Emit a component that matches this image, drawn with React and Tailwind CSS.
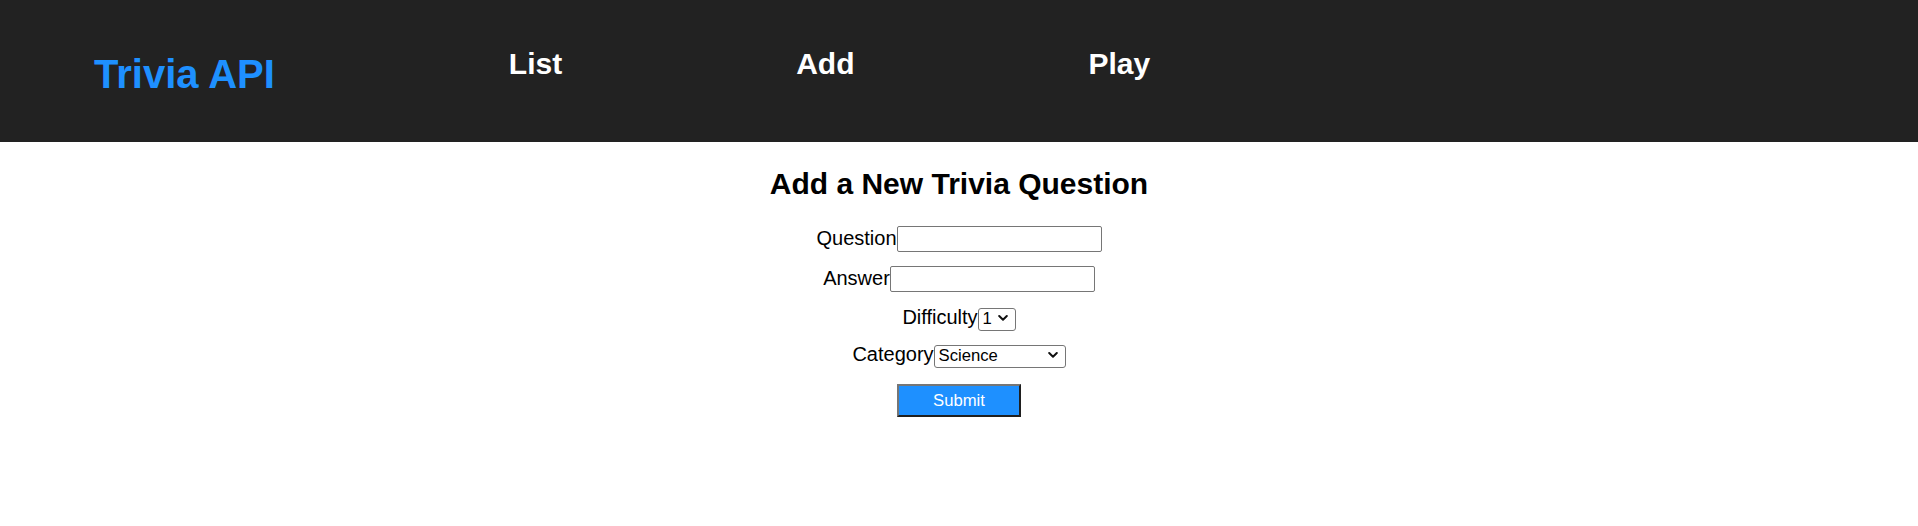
import React from "react";

function Chevron() {
  return (
    <svg width="10" height="7" viewBox="0 0 10 7" className="pointer-events-none absolute right-[8px] top-1/2 -translate-y-1/2">
      <path d="M1.2 1.5l3.8 3.8 3.8-3.8" fill="none" stroke="#111" strokeWidth="2" strokeLinecap="round" strokeLinejoin="round" />
    </svg>
  );
}

function Select({ value, options, width }) {
  return (
    <div className={`relative ${width} h-[23px]`}>
      <select
        defaultValue={value}
        className="h-full w-full appearance-none rounded-[3px] border border-[#767676] bg-white pl-[4px] pr-[20px] text-[16.67px] leading-none text-black outline-none"
        style={{ fontFamily: '"Liberation Sans", Arial, sans-serif' }}
      >
        {options.map((o) => (
          <option key={o} value={o}>
            {o}
          </option>
        ))}
      </select>
      <Chevron />
    </div>
  );
}

export default function App() {
  const font = { fontFamily: '"Liberation Sans", Arial, Helvetica, sans-serif' };
  return (
    <div className="min-h-[526px] w-full bg-white text-black" style={font}>
      <header className="flex h-[142px] items-start bg-[#222222] pl-[94px]">
        <h1 className="mt-[51px] text-[40px] font-bold leading-[46px] text-[#1e90ff]">Trivia API</h1>
        <nav className="ml-[234px] mt-[47px] flex gap-[234px] text-[30px] font-bold leading-[34px] text-white">
          <a className="cursor-pointer">List</a>
          <a className="cursor-pointer">Add</a>
          <a className="cursor-pointer">Play</a>
        </nav>
      </header>
      <main className="flex flex-col items-center">
        <h2 className="mt-[25px] text-[30px] font-bold leading-[34px]">Add a New Trivia Question</h2>
        <form className="flex flex-col items-center text-[20px] leading-[23px]" onSubmit={(e) => e.preventDefault()}>
          <label className="mt-[25px] flex h-[26px] items-center">
            <span className="-mt-[1px]">Question</span>
            <input type="text" className="h-[26px] w-[205px] rounded-[2px] border border-[#767676] bg-white px-[2px] text-[16.67px] outline-none" />
          </label>
          <label className="mt-[14px] flex h-[26px] items-center">
            <span className="-mt-[1px]">Answer</span>
            <input type="text" className="h-[26px] w-[205px] rounded-[2px] border border-[#767676] bg-white px-[2px] text-[16.67px] outline-none" />
          </label>
          <label className="mt-[14px] flex h-[23px] items-center">
            <span className="-mt-[1px]">Difficulty</span>
            <Select value="1" options={["1", "2", "3", "4", "5"]} width="w-[38px]" />
          </label>
          <label className="mt-[14px] flex h-[23px] items-center">
            <span className="-mt-[1px]">Category</span>
            <Select value="Science" options={["Science", "Art", "Geography", "History", "Entertainment", "Sports"]} width="w-[132px]" />
          </label>
          <button
            type="submit"
            className="mt-[18px] h-[33px] w-[124px] border-2 border-t-[#767676] border-l-[#767676] border-r-[#1f1f1f] border-b-[#1f1f1f] bg-[#1e90ff] pt-[1px] text-[16.67px] leading-none text-white"
          >
            Submit
          </button>
        </form>
      </main>
    </div>
  );
}
